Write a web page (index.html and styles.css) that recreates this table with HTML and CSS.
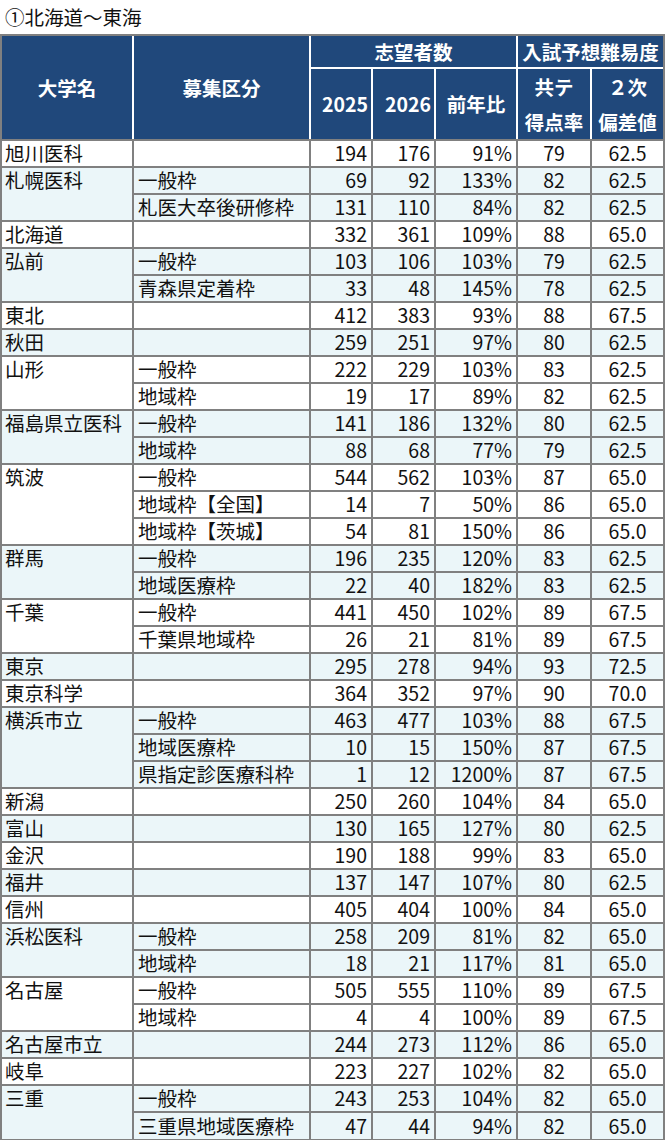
FILE: index.html
```html
<!DOCTYPE html>
<html lang="ja">
<head>
<meta charset="utf-8">
<title>北海道〜東海</title>
<link rel="stylesheet" href="styles.css">
</head>
<body>
<div class="title">①北海道〜東海</div>
<div class="frame">
<table class="grid">
<colgroup>
<col class="c-univ"><col class="c-kind"><col class="c-y1"><col class="c-y2"><col class="c-ratio"><col class="c-score"><col class="c-dev">
</colgroup>
<thead>
<tr class="h1">
<th rowspan="2" class="hb">大学名</th>
<th rowspan="2" class="hb">募集区分</th>
<th colspan="3">志望者数</th>
<th colspan="2">入試予想難易度</th>
</tr>
<tr class="h2">
<th class="hb hr">2025</th>
<th class="hb hr">2026</th>
<th class="hb">前年比</th>
<th class="hb two">共テ<br>得点率</th>
<th class="hb two">２次<br>偏差値</th>
</tr>
</thead>
<tbody>
<tr><td class="u">旭川医科</td><td class="k"></td><td class="n">194</td><td class="n">176</td><td class="n">91%</td><td class="m">79</td><td class="m">62.5</td></tr>
<tr class="alt"><td class="u" rowspan="2">札幌医科</td><td class="k">一般枠</td><td class="n">69</td><td class="n">92</td><td class="n">133%</td><td class="m">82</td><td class="m">62.5</td></tr>
<tr class="alt"><td class="k">札医大卒後研修枠</td><td class="n">131</td><td class="n">110</td><td class="n">84%</td><td class="m">82</td><td class="m">62.5</td></tr>
<tr><td class="u">北海道</td><td class="k"></td><td class="n">332</td><td class="n">361</td><td class="n">109%</td><td class="m">88</td><td class="m">65.0</td></tr>
<tr class="alt"><td class="u" rowspan="2">弘前</td><td class="k">一般枠</td><td class="n">103</td><td class="n">106</td><td class="n">103%</td><td class="m">79</td><td class="m">62.5</td></tr>
<tr class="alt"><td class="k">青森県定着枠</td><td class="n">33</td><td class="n">48</td><td class="n">145%</td><td class="m">78</td><td class="m">62.5</td></tr>
<tr><td class="u">東北</td><td class="k"></td><td class="n">412</td><td class="n">383</td><td class="n">93%</td><td class="m">88</td><td class="m">67.5</td></tr>
<tr class="alt"><td class="u">秋田</td><td class="k"></td><td class="n">259</td><td class="n">251</td><td class="n">97%</td><td class="m">80</td><td class="m">62.5</td></tr>
<tr><td class="u" rowspan="2">山形</td><td class="k">一般枠</td><td class="n">222</td><td class="n">229</td><td class="n">103%</td><td class="m">83</td><td class="m">62.5</td></tr>
<tr><td class="k">地域枠</td><td class="n">19</td><td class="n">17</td><td class="n">89%</td><td class="m">82</td><td class="m">62.5</td></tr>
<tr class="alt"><td class="u" rowspan="2">福島県立医科</td><td class="k">一般枠</td><td class="n">141</td><td class="n">186</td><td class="n">132%</td><td class="m">80</td><td class="m">62.5</td></tr>
<tr class="alt"><td class="k">地域枠</td><td class="n">88</td><td class="n">68</td><td class="n">77%</td><td class="m">79</td><td class="m">62.5</td></tr>
<tr><td class="u" rowspan="3">筑波</td><td class="k">一般枠</td><td class="n">544</td><td class="n">562</td><td class="n">103%</td><td class="m">87</td><td class="m">65.0</td></tr>
<tr><td class="k">地域枠【全国】</td><td class="n">14</td><td class="n">7</td><td class="n">50%</td><td class="m">86</td><td class="m">65.0</td></tr>
<tr><td class="k">地域枠【茨城】</td><td class="n">54</td><td class="n">81</td><td class="n">150%</td><td class="m">86</td><td class="m">65.0</td></tr>
<tr class="alt"><td class="u" rowspan="2">群馬</td><td class="k">一般枠</td><td class="n">196</td><td class="n">235</td><td class="n">120%</td><td class="m">83</td><td class="m">62.5</td></tr>
<tr class="alt"><td class="k">地域医療枠</td><td class="n">22</td><td class="n">40</td><td class="n">182%</td><td class="m">83</td><td class="m">62.5</td></tr>
<tr><td class="u" rowspan="2">千葉</td><td class="k">一般枠</td><td class="n">441</td><td class="n">450</td><td class="n">102%</td><td class="m">89</td><td class="m">67.5</td></tr>
<tr><td class="k">千葉県地域枠</td><td class="n">26</td><td class="n">21</td><td class="n">81%</td><td class="m">89</td><td class="m">67.5</td></tr>
<tr class="alt"><td class="u">東京</td><td class="k"></td><td class="n">295</td><td class="n">278</td><td class="n">94%</td><td class="m">93</td><td class="m">72.5</td></tr>
<tr><td class="u">東京科学</td><td class="k"></td><td class="n">364</td><td class="n">352</td><td class="n">97%</td><td class="m">90</td><td class="m">70.0</td></tr>
<tr class="alt"><td class="u" rowspan="3">横浜市立</td><td class="k">一般枠</td><td class="n">463</td><td class="n">477</td><td class="n">103%</td><td class="m">88</td><td class="m">67.5</td></tr>
<tr class="alt"><td class="k">地域医療枠</td><td class="n">10</td><td class="n">15</td><td class="n">150%</td><td class="m">87</td><td class="m">67.5</td></tr>
<tr class="alt"><td class="k">県指定診医療科枠</td><td class="n">1</td><td class="n">12</td><td class="n">1200%</td><td class="m">87</td><td class="m">67.5</td></tr>
<tr><td class="u">新潟</td><td class="k"></td><td class="n">250</td><td class="n">260</td><td class="n">104%</td><td class="m">84</td><td class="m">65.0</td></tr>
<tr class="alt"><td class="u">富山</td><td class="k"></td><td class="n">130</td><td class="n">165</td><td class="n">127%</td><td class="m">80</td><td class="m">62.5</td></tr>
<tr><td class="u">金沢</td><td class="k"></td><td class="n">190</td><td class="n">188</td><td class="n">99%</td><td class="m">83</td><td class="m">65.0</td></tr>
<tr class="alt"><td class="u">福井</td><td class="k"></td><td class="n">137</td><td class="n">147</td><td class="n">107%</td><td class="m">80</td><td class="m">62.5</td></tr>
<tr><td class="u">信州</td><td class="k"></td><td class="n">405</td><td class="n">404</td><td class="n">100%</td><td class="m">84</td><td class="m">65.0</td></tr>
<tr class="alt"><td class="u" rowspan="2">浜松医科</td><td class="k">一般枠</td><td class="n">258</td><td class="n">209</td><td class="n">81%</td><td class="m">82</td><td class="m">65.0</td></tr>
<tr class="alt"><td class="k">地域枠</td><td class="n">18</td><td class="n">21</td><td class="n">117%</td><td class="m">81</td><td class="m">65.0</td></tr>
<tr><td class="u" rowspan="2">名古屋</td><td class="k">一般枠</td><td class="n">505</td><td class="n">555</td><td class="n">110%</td><td class="m">89</td><td class="m">67.5</td></tr>
<tr><td class="k">地域枠</td><td class="n">4</td><td class="n">4</td><td class="n">100%</td><td class="m">89</td><td class="m">67.5</td></tr>
<tr class="alt"><td class="u">名古屋市立</td><td class="k"></td><td class="n">244</td><td class="n">273</td><td class="n">112%</td><td class="m">86</td><td class="m">65.0</td></tr>
<tr><td class="u">岐阜</td><td class="k"></td><td class="n">223</td><td class="n">227</td><td class="n">102%</td><td class="m">82</td><td class="m">65.0</td></tr>
<tr class="alt"><td class="u" rowspan="2">三重</td><td class="k">一般枠</td><td class="n">243</td><td class="n">253</td><td class="n">104%</td><td class="m">82</td><td class="m">65.0</td></tr>
<tr class="alt"><td class="k">三重県地域医療枠</td><td class="n">47</td><td class="n">44</td><td class="n">94%</td><td class="m">82</td><td class="m">65.0</td></tr>
</tbody>
</table>
</div>
</body>
</html>
```

FILE: styles.css
```css
html, body {
  margin: 0;
  padding: 0;
  background: #ffffff;
}

body {
  font-family: "Noto Sans CJK JP", "Noto Sans", sans-serif;
  color: #111111;
}

.title {
  height: 34px;
  line-height: 34px;
  padding-left: 5px;
  font-size: 19.5px;
  white-space: nowrap;
}

.frame {
  width: 665px;
  box-sizing: border-box;
  border: 2px solid #808080;
}

.grid {
  width: 661px;
  table-layout: fixed;
  border-collapse: collapse;
  border-style: hidden;
  font-size: 19.5px;
}

.c-univ { width: 131px; }
.c-kind { width: 177px; }
.c-y1 { width: 62px; }
.c-y2 { width: 63px; }
.c-ratio { width: 82px; }
.c-score { width: 74px; }
.c-dev { width: 72px; }

.grid th {
  background: #20487b;
  color: #ffffff;
  font-weight: 700;
  border: 2px solid #ffffff;
  padding: 0 4px;
  text-align: center;
  vertical-align: middle;
  white-space: nowrap;
  line-height: 28px;
}

.grid th.hb {
  border-bottom-color: #808080;
}

.grid th.hr {
  text-align: right;
  padding-right: 3px;
}

.grid th.two {
  line-height: 35px;
}

.h1 { height: 32px; }
.h2 { height: 70px; }

.grid tbody tr {
  height: 27px;
}

.grid td {
  border: 2px solid #808080;
  padding: 0 4px 2px;
  line-height: 23px;
  white-space: nowrap;
  background: #ffffff;
}

.grid tr.alt td {
  background: #ebf6f9;
}

.grid td.u {
  padding-left: 3px;
  vertical-align: top;
}

.grid td.k {
  padding-left: 4px;
}

.grid td.n {
  text-align: right;
  padding-right: 4px;
}

.grid td.m {
  text-align: center;
  padding-left: 0;
  padding-right: 0;
}
```
